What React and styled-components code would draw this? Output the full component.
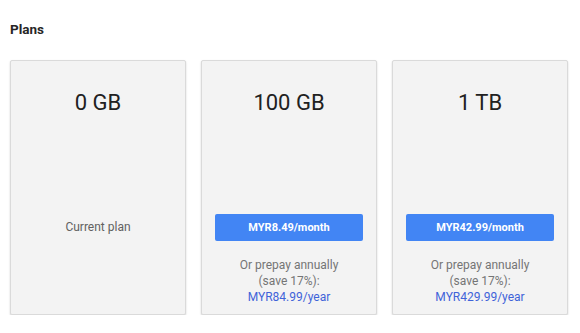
import React from "react";
import styled, { createGlobalStyle } from "styled-components";

const plans = [
  { size: "0 GB", current: true },
  { size: "100 GB", monthly: "MYR8.49/month", yearly: "MYR84.99/year" },
  { size: "1 TB", monthly: "MYR42.99/month", yearly: "MYR429.99/year" },
];

const App = () => {
  return (
    <>
      <GlobalStyle />
      <Page>
        <Title>Plans</Title>
        <Cards>
          {plans.map((plan) => (
            <Card key={plan.size}>
              <Size>{plan.size}</Size>
              <Footer>
                {plan.current ? (
                  <CurrentLabel>Current plan</CurrentLabel>
                ) : (
                  <>
                    <BuyBtn type="button">{plan.monthly}</BuyBtn>
                    <Note>
                      Or prepay annually
                      <br />
                      (save 17%):
                      <br />
                      <YearLink href="#">{plan.yearly}</YearLink>
                    </Note>
                  </>
                )}
              </Footer>
            </Card>
          ))}
        </Cards>
      </Page>
    </>
  );
};

export default App;

const GlobalStyle = createGlobalStyle`
  body {
    margin: 0;
    background: #ffffff;
    font-family: Roboto, "Liberation Sans", Arial, sans-serif;
  }
`;

const Page = styled.div`
  padding: 21px 10px 0;
`;

const Title = styled.h2`
  margin: 0;
  font-size: 13.5px;
  line-height: 16px;
  font-weight: 700;
  color: #262626;
`;

const Cards = styled.div`
  display: flex;
  gap: 15px;
  margin-top: 23px;
`;

const Card = styled.div`
  width: 176px;
  height: 255px;
  box-sizing: border-box;
  display: flex;
  flex-direction: column;
  align-items: center;
  padding: 28px 13px 0;
  background: #f3f3f3;
  border: 1px solid #dadada;
  border-radius: 2px;
  box-shadow: 0 1px 2px rgba(0, 0, 0, 0.18);
`;

const Size = styled.div`
  font-size: 22px;
  line-height: 28px;
  color: #212121;
`;

const Footer = styled.div`
  margin-top: auto;
  width: 100%;
  height: 100px;
  display: flex;
  flex-direction: column;
  align-items: center;
`;

const CurrentLabel = styled.div`
  font-size: 12px;
  line-height: 27px;
  color: #616161;
`;

const BuyBtn = styled.button`
  width: 100%;
  height: 27px;
  border: none;
  border-radius: 2px;
  background: #4285f4;
  color: #ffffff;
  font-family: inherit;
  font-size: 11px;
  font-weight: 700;
  cursor: pointer;
`;

const Note = styled.p`
  margin: 16px 0 0;
  font-size: 12px;
  line-height: 16px;
  color: #757575;
  text-align: center;
`;

const YearLink = styled.a`
  color: #3f63d9;
  text-decoration: none;
`;
